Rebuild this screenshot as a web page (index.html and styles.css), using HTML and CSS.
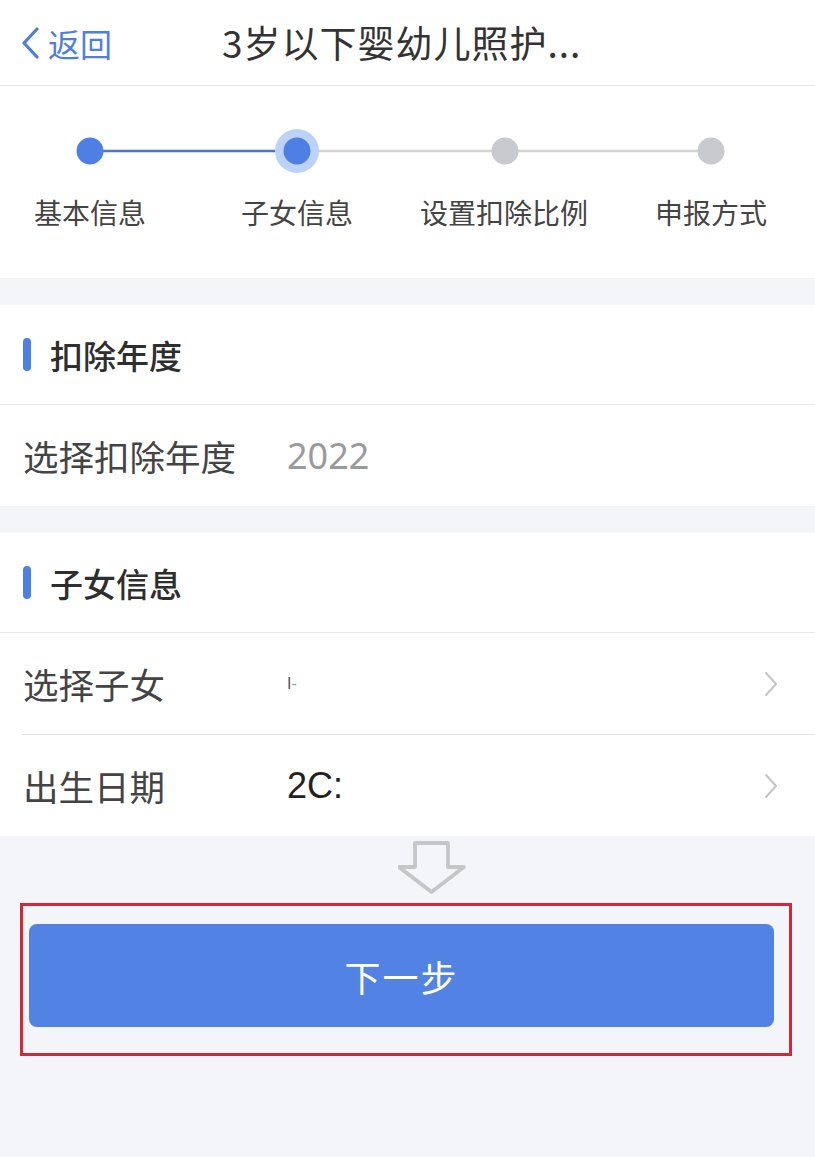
FILE: index.html
```html
<!DOCTYPE html>
<html lang="zh-CN">
<head>
<meta charset="utf-8">
<title>3岁以下婴幼儿照护</title>
<link rel="stylesheet" href="styles.css">
</head>
<body>
<div class="page">
  <header class="nav">
    <div class="back">
      <svg class="back-icon" width="20" height="32" viewBox="0 0 20 32"><path d="M17 2 L4 16 L17 30" fill="none" stroke="#4f7fdc" stroke-width="3.2" stroke-linecap="round" stroke-linejoin="round"/></svg>
      <span class="back-text">返回</span>
    </div>
    <div class="title">3岁以下婴幼儿照护...</div>
  </header>

  <section class="steps">
    <svg class="track" width="815" height="50" viewBox="0 0 815 50">
      <line x1="90" y1="25" x2="297" y2="25" stroke="#4a77c9" stroke-width="2.5"/>
      <line x1="297" y1="25" x2="711" y2="25" stroke="#d3d3d8" stroke-width="2.5"/>
      <circle cx="90" cy="25" r="13.5" fill="#4e7fe3"/>
      <circle cx="297" cy="25" r="22" fill="#bcd2f6"/>
      <circle cx="297" cy="25" r="13.5" fill="#4e7fe3"/>
      <circle cx="505" cy="25" r="13.5" fill="#c9c9d0"/>
      <circle cx="711" cy="25" r="13.5" fill="#c9c9d0"/>
    </svg>
    <div class="step-labels">
      <span>基本信息</span>
      <span>子女信息</span>
      <span>设置扣除比例</span>
      <span>申报方式</span>
    </div>
  </section>

  <section class="card card-year">
    <div class="card-head"><span class="bar"></span><span class="head-text">扣除年度</span></div>
    <div class="row">
      <span class="row-label">选择扣除年度</span>
      <span class="row-value muted">2022</span>
    </div>
  </section>

  <section class="card card-child">
    <div class="card-head"><span class="bar"></span><span class="head-text">子女信息</span></div>
    <div class="row row-link">
      <span class="row-label">选择子女</span>
      <span class="row-value small">I<span class="scrub">-</span></span>
      <svg class="chev" width="16" height="26" viewBox="0 0 16 26"><path d="M3 2 L13 13 L3 24" fill="none" stroke="#c4c4c8" stroke-width="2" stroke-linecap="round" stroke-linejoin="round"/></svg>
    </div>
    <div class="row row-link">
      <span class="row-label">出生日期</span>
      <span class="row-value">2C:</span>
      <svg class="chev" width="16" height="26" viewBox="0 0 16 26"><path d="M3 2 L13 13 L3 24" fill="none" stroke="#c4c4c8" stroke-width="2" stroke-linecap="round" stroke-linejoin="round"/></svg>
    </div>
  </section>

  <div class="arrow-wrap">
    <svg width="68" height="54" viewBox="0 0 68 54"><path d="M17 2 H50 V26 H66 L33.5 51 L1 26 H17 Z" fill="none" stroke="#c6c6c8" stroke-width="3.8" stroke-linejoin="round"/></svg>
  </div>

  <div class="highlight">
    <button class="next">下一步</button>
  </div>
</div>
</body>
</html>
```

FILE: styles.css
```css
html, body {
  margin: 0;
  padding: 0;
}
body {
  background: #f4f5f9;
  font-family: "Noto Sans CJK SC", "Noto Sans", "Liberation Sans", sans-serif;
  color: #333;
}
.page {
  width: 815px;
  min-height: 1157px;
  background: #f4f5f9;
}
.nav {
  height: 86px;
  background: #fff;
  border-bottom: 1px solid #e4e4e6;
  display: flex;
  align-items: center;
  box-sizing: border-box;
}
.back {
  display: flex;
  align-items: center;
  width: 222px;
  padding-left: 20px;
  box-sizing: border-box;
  gap: 8px;
}
.back-icon {
  display: block;
}
.back-text {
  font-size: 32px;
  color: #4f7fdc;
  line-height: 1;
}
.title {
  font-size: 37px;
  color: #333;
  line-height: 1;
  letter-spacing: 1px;
}
.steps {
  background: #fff;
  height: 192px;
  padding-top: 40px;
  box-sizing: border-box;
}
.track {
  display: block;
}
.step-labels {
  display: grid;
  grid-template-columns: repeat(4, 172px);
  column-gap: 35px;
  padding-left: 4px;
  margin-top: 20px;
}
.step-labels span {
  text-align: center;
  font-size: 28px;
  line-height: 1.2;
  color: #444;
}
.card {
  background: #fff;
  margin-top: 27px;
}
.card-head {
  height: 99px;
  display: flex;
  align-items: center;
  padding-left: 23px;
  gap: 19px;
  border-bottom: 1px solid #e8e8ea;
}
.bar {
  width: 8px;
  height: 33px;
  border-radius: 4px;
  background: #4e7fe3;
}
.head-text {
  font-size: 33px;
  font-weight: 500;
  color: #2e2e2e;
}
.row {
  height: 101px;
  display: flex;
  align-items: center;
  padding-left: 23px;
  padding-right: 36px;
}
.row-label {
  width: 264px;
  font-size: 35.5px;
  color: #444;
}
.row-value {
  flex: 1;
  font-size: 36px;
  color: #222;
  font-family: "Liberation Sans", "Noto Sans CJK SC", sans-serif;
}
.row-value.muted {
  color: #9a9a9e;
  font-family: "Noto Sans", "Noto Sans CJK SC", sans-serif;
}
.row-value.small {
  font-size: 16px;
  color: #555;
}
.scrub {
  color: #999;
}
.card-child .row-link + .row-link {
  margin-left: 22px;
  padding-left: 1px;
  border-top: 1px solid #e4e4e6;
}
.chev {
  display: block;
}
.arrow-wrap {
  display: flex;
  justify-content: center;
  padding-top: 5px;
  padding-left: 49px;
}
.arrow-wrap svg {
  display: block;
}
.highlight {
  margin: 8px 23px 0 20px;
  border: 3px solid #d1283a;
  padding: 18px 15px 26px 6px;
}
.next {
  display: block;
  width: 100%;
  height: 103px;
  border: none;
  border-radius: 8px;
  background: #5282e4;
  color: #fff;
  font-family: "Noto Sans CJK SC", sans-serif;
  font-size: 36px;
  letter-spacing: 2px;
}
```
